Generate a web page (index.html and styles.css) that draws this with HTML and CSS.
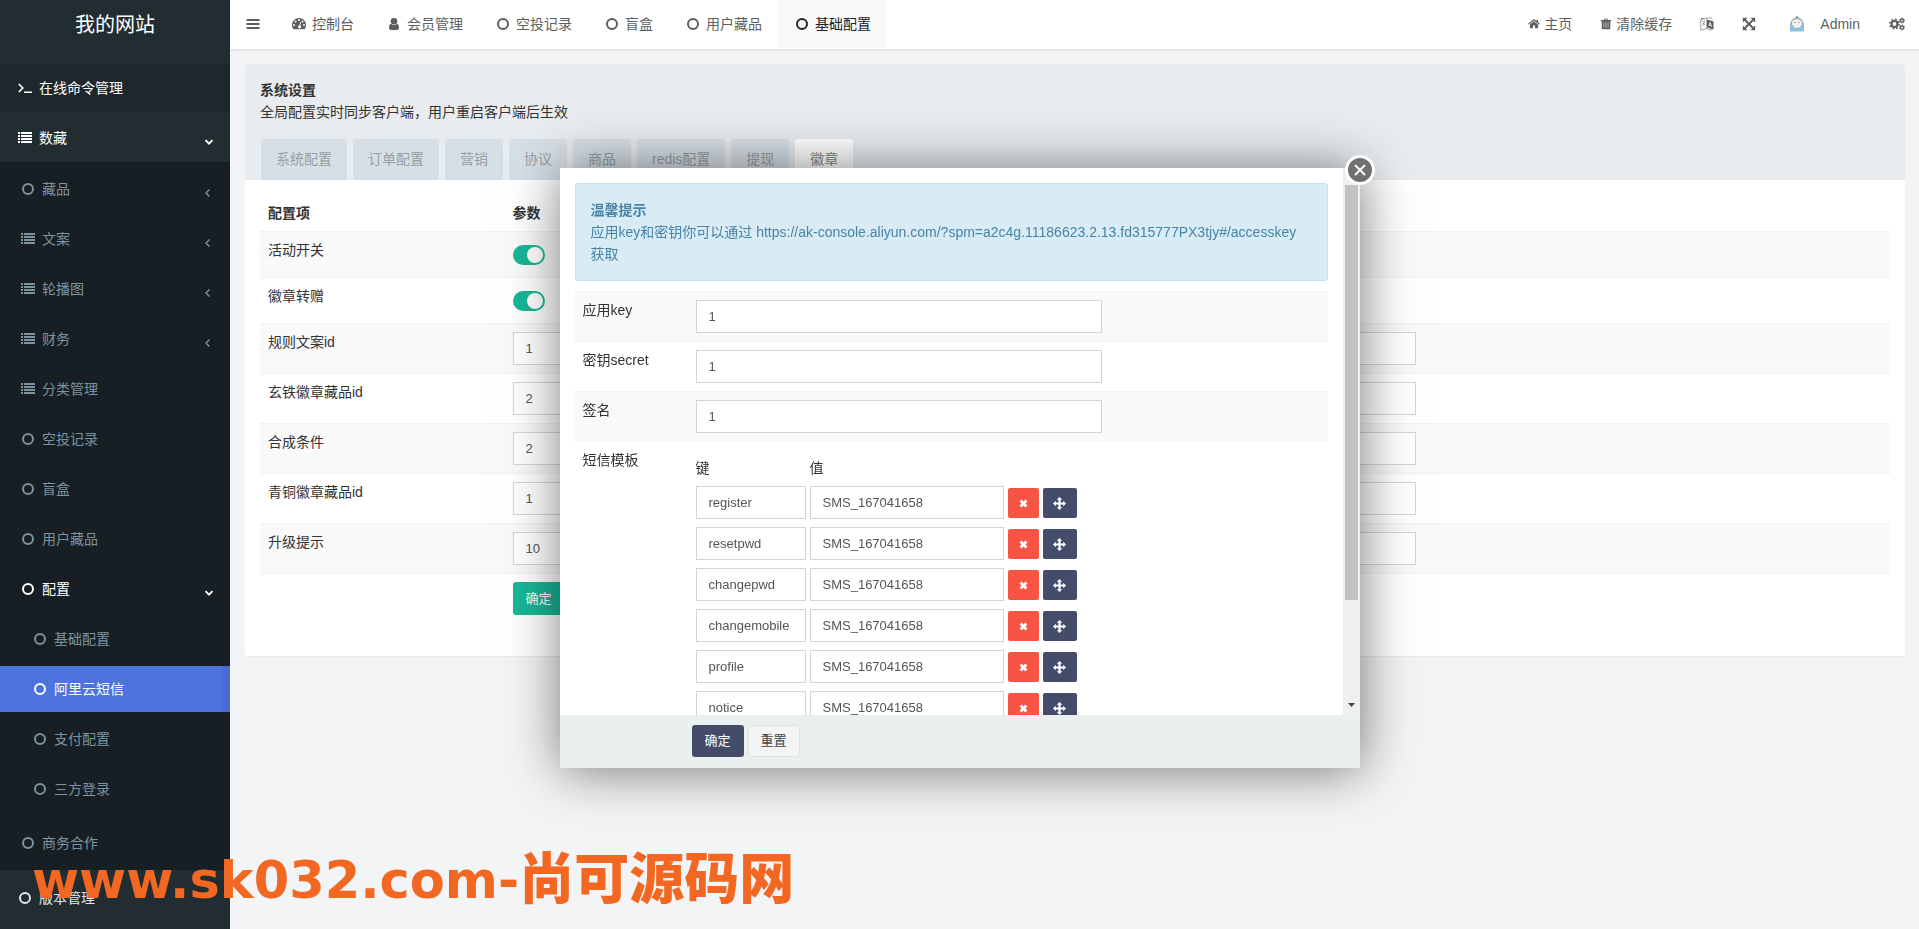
FILE: index.html
```
<!DOCTYPE html>
<html lang="zh-CN">
<head>
<meta charset="utf-8">
<title>我的网站</title>
<link rel="stylesheet" href="styles.css">
</head>
<body>
<svg class="sprite" aria-hidden="true">
  <symbol id="i-ring" viewBox="0 0 14 14"><circle cx="7" cy="7" r="5" fill="none" stroke="currentColor" stroke-width="2"/></symbol>
  <symbol id="i-list" viewBox="0 0 14 14"><path fill="currentColor" d="M0 1h2v2H0zM3 1h11v2H3zM0 4h2v2H0zM3 4h11v2H3zM0 7h2v2H0zM3 7h11v2H3zM0 10h2v2H0zM3 10h11v2H3z"/></symbol>
  <symbol id="i-term" viewBox="0 0 14 14"><path fill="none" stroke="currentColor" stroke-width="1.6" d="M.8 3l4 4-4 4"/><path fill="currentColor" d="M6 10.5h8V12H6z"/></symbol>
  <symbol id="i-bars" viewBox="0 0 14 14"><path fill="currentColor" d="M.5 2h13v2H.5zM.5 6h13v2H.5zM.5 10h13v2H.5z"/></symbol>
  <symbol id="i-dash" viewBox="0 0 14 14"><path fill="currentColor" fill-rule="evenodd" d="M7 1a7 7 0 0 0-5.900 10.700q.3.500.8.500h10.200q.5 0 .8-.5A7 7 0 0 0 7 1zM2 7a1 1 0 1 1 0 2 1 1 0 0 1 0-2zM3.500 3.500a1 1 0 1 1 0 2 1 1 0 0 1 0-2zM7 2a1 1 0 1 1 0 2 1 1 0 0 1 0-2zM10.500 3.500a1 1 0 1 1 0 2 1 1 0 0 1 0-2zM12 7a1 1 0 1 1 0 2 1 1 0 0 1 0-2zM8.400 4.900l.8.300-.9 3.200a1.600 1.600 0 1 1-.8-.2z"/></symbol>
  <symbol id="i-user" viewBox="0 0 14 14"><circle cx="7" cy="4.200" r="3.300" fill="currentColor"/><path fill="currentColor" d="M4 6.800C2.500 7.200 2 9 2 10.800 2 12 2.800 13 4 13h6c1.200 0 2-1 2-2.200 0-1.800-.5-3.600-2-4a4.200 4.200 0 0 1-6 0z"/></symbol>
  <symbol id="i-home" viewBox="0 0 14 14"><path fill="currentColor" d="M7 3.900l4.800 4v3.600q0 .5-.5.500H8.200V8.700H5.800V12H2.700q-.5 0-.5-.5V7.900z"/><path fill="none" stroke="currentColor" stroke-width="1.400" d="M.6 7.200L7 2l6.400 5.200"/><path fill="currentColor" d="M10 2h1.800v3.500L10 4z"/></symbol>
  <symbol id="i-trash" viewBox="0 0 14 14"><path fill="none" stroke="currentColor" d="M5 2.500l.5-1.300h3L9 2.500"/><path fill="currentColor" fill-rule="evenodd" d="M1 2.300h12v1.400h-1v8q0 1.500-1.300 1.500H3.300q-1.300 0-1.300-1.500v-8H1zM4.300 5v6.500h.6V5zM6.700 5v6.500h.6V5zM9.100 5v6.500h.6V5z"/></symbol>
  <symbol id="i-lang" viewBox="0 0 14 14"><path fill="none" stroke="currentColor" stroke-width=".6" d="M.8 2.500l6-1.700v10.400l-6 2zM7 11.500l3.500 1.500 1.500-.5M8 1.200l3-.7 1.500 2"/><path fill="none" stroke="currentColor" stroke-width=".6" d="M2.200 4.500l3-.8M4.700 4.500L2.500 9M3 6l2.500 2.300"/><path fill="currentColor" fill-rule="evenodd" d="M7 2.600l6.500 2v8L7 10.500zM9.800 5.300L8.500 9l.8.200.3-.8 1.300.4.3 1 .8.200L10.700 5.600zm.4 1.300l.5 1.400-.9-.3zM1 1h4L1 2.200z"/></symbol>
  <symbol id="i-full" viewBox="0 0 14 14"><path fill="currentColor" d="M.8.8h4.700L.8 5.500zM13.200.8v4.700L8.500.8zM.8 13.200V8.500l4.700 4.700zM13.200 13.200H8.500l4.700-4.700z"/><path stroke="currentColor" stroke-width="1.900" d="M2.500 2.500l9 9M11.500 2.500l-9 9"/></symbol>
  <symbol id="i-cogs" viewBox="0 0 16 14"><circle cx="5.500" cy="7" r="3" fill="none" stroke="currentColor" stroke-width="2.200"/><circle cx="5.500" cy="7" r="4.700" fill="none" stroke="currentColor" stroke-width="1.500" stroke-dasharray="1.850 1.840"/><circle cx="13" cy="3.600" r="1.600" fill="none" stroke="currentColor" stroke-width="1.300"/><circle cx="13" cy="3.600" r="2.500" fill="none" stroke="currentColor" stroke-dasharray="1 .96"/><circle cx="13" cy="10.600" r="1.600" fill="none" stroke="currentColor" stroke-width="1.300"/><circle cx="13" cy="10.600" r="2.500" fill="none" stroke="currentColor" stroke-dasharray="1 .96"/></symbol>
  <symbol id="i-left" viewBox="0 0 14 14"><path fill="none" stroke="currentColor" stroke-width="1.400" d="M8.500 3.500L5 7l3.500 3.500"/></symbol>
  <symbol id="i-down" viewBox="0 0 14 14"><path fill="none" stroke="currentColor" stroke-width="1.800" d="M3.500 5.200L7 8.700l3.500-3.500"/></symbol>
  <symbol id="i-times" viewBox="0 0 14 14"><path stroke="currentColor" stroke-width="4.400" d="M2.500 2.500l9 9M11.500 2.500l-9 9"/></symbol>
  <symbol id="i-move" viewBox="0 0 14 14"><path fill="currentColor" d="M7 0l3 3H8.200v2.800H11V4l3 3-3 3V8.200H8.200V11H10l-3 3-3-3h1.800V8.200H3V10L0 7l3-3v1.800h2.800V3H4z"/></symbol>
</svg>

<div class="app">
  <aside class="sidebar">
    <a class="brand" href="#">我的网站</a>
    <nav class="menu">
      <a class="item top dark" href="#"><svg class="ico"><use href="#i-term"/></svg>在线命令管理</a>
      <a class="item top" href="#"><svg class="ico"><use href="#i-list"/></svg>数藏<svg class="arrow"><use href="#i-down"/></svg></a>
      <div class="sub">
        <a class="item" href="#"><svg class="ico"><use href="#i-ring"/></svg>藏品<svg class="arrow"><use href="#i-left"/></svg></a>
        <a class="item" href="#"><svg class="ico"><use href="#i-list"/></svg>文案<svg class="arrow"><use href="#i-left"/></svg></a>
        <a class="item" href="#"><svg class="ico"><use href="#i-list"/></svg>轮播图<svg class="arrow"><use href="#i-left"/></svg></a>
        <a class="item" href="#"><svg class="ico"><use href="#i-list"/></svg>财务<svg class="arrow"><use href="#i-left"/></svg></a>
        <a class="item" href="#"><svg class="ico"><use href="#i-list"/></svg>分类管理</a>
        <a class="item" href="#"><svg class="ico"><use href="#i-ring"/></svg>空投记录</a>
        <a class="item" href="#"><svg class="ico"><use href="#i-ring"/></svg>盲盒</a>
        <a class="item" href="#"><svg class="ico"><use href="#i-ring"/></svg>用户藏品</a>
        <a class="item open" href="#"><svg class="ico"><use href="#i-ring"/></svg>配置<svg class="arrow"><use href="#i-down"/></svg></a>
        <div class="subsub">
          <a class="item" href="#"><svg class="ico"><use href="#i-ring"/></svg>基础配置</a>
          <a class="item active" href="#"><svg class="ico"><use href="#i-ring"/></svg>阿里云短信</a>
          <a class="item" href="#"><svg class="ico"><use href="#i-ring"/></svg>支付配置</a>
          <a class="item" href="#"><svg class="ico"><use href="#i-ring"/></svg>三方登录</a>
        </div>
        <a class="item" href="#"><svg class="ico"><use href="#i-ring"/></svg>商务合作</a>
      </div>
      <a class="item top last" href="#"><svg class="ico"><use href="#i-ring"/></svg>版本管理</a>
    </nav>
  </aside>

  <div class="main">
    <header class="navbar">
      <button class="nav-link bars" type="button" aria-label="菜单"><svg class="ico"><use href="#i-bars"/></svg></button>
      <nav class="nav-tabs">
        <a class="nav-link" href="#"><svg class="ico"><use href="#i-dash"/></svg>控制台</a>
        <a class="nav-link" href="#"><svg class="ico"><use href="#i-user"/></svg>会员管理</a>
        <a class="nav-link" href="#"><svg class="ico"><use href="#i-ring"/></svg>空投记录</a>
        <a class="nav-link" href="#"><svg class="ico"><use href="#i-ring"/></svg>盲盒</a>
        <a class="nav-link" href="#"><svg class="ico"><use href="#i-ring"/></svg>用户藏品</a>
        <a class="nav-link current" href="#"><svg class="ico"><use href="#i-ring"/></svg>基础配置</a>
      </nav>
      <nav class="nav-right">
        <a class="nav-link" href="#"><svg class="ico small"><use href="#i-home"/></svg>主页</a>
        <a class="nav-link" href="#"><svg class="ico small"><use href="#i-trash"/></svg>清除缓存</a>
        <a class="nav-link" href="#" aria-label="语言"><svg class="ico"><use href="#i-lang"/></svg></a>
        <a class="nav-link" href="#" aria-label="全屏"><svg class="ico"><use href="#i-full"/></svg></a>
        <a class="nav-link user" href="#">
          <svg class="avatar" viewBox="0 0 16 16"><path fill="#8cc4e6" d="M1 15.500V8c0-2 1-3 3-3h8c2 0 3 1 3 3v7.500z"/><circle cx="8" cy="7" r="5.500" fill="#eef3f5" stroke="#9aa9b2"/><path fill="none" stroke="#b0a08c" d="M4 4.500Q8 .5 12 4.500"/><circle cx="5.800" cy="6.500" r=".6" fill="#667"/><circle cx="10.200" cy="6.500" r=".6" fill="#667"/><circle cx="8" cy="1" r="1" fill="#8a8f88"/></svg>Admin</a>
        <a class="nav-link" href="#" aria-label="设置"><svg class="ico cogs"><use href="#i-cogs"/></svg></a>
      </nav>
    </header>

    <main class="content">
      <section class="panel">
        <div class="panel-head">
          <h1>系统设置</h1>
          <p>全局配置实时同步客户端，用户重启客户端后生效</p>
          <nav class="tabs">
            <a href="#">系统配置</a><a href="#">订单配置</a><a href="#">营销</a><a href="#">协议</a><a href="#">商品</a><a href="#">redis配置</a><a href="#">提现</a><a class="on" href="#">徽章</a>
          </nav>
        </div>
        <form class="panel-body">
          <table class="config">
            <thead><tr><th class="c-name">配置项</th><th class="c-value">参数</th><th></th></tr></thead>
            <tbody>
              <tr class="sw"><td><label for="a1">活动开关</label></td><td><input id="a1" class="switch" type="checkbox" checked></td><td></td></tr>
              <tr class="sw"><td><label for="a2">徽章转赠</label></td><td><input id="a2" class="switch" type="checkbox" checked></td><td></td></tr>
              <tr><td><label for="a3">规则文案id</label></td><td><input id="a3" class="field" type="text" value="1"></td><td></td></tr>
              <tr><td><label for="a4">玄铁徽章藏品id</label></td><td><input id="a4" class="field" type="text" value="2"></td><td></td></tr>
              <tr><td><label for="a5">合成条件</label></td><td><input id="a5" class="field" type="text" value="2"></td><td></td></tr>
              <tr><td><label for="a6">青铜徽章藏品id</label></td><td><input id="a6" class="field" type="text" value="1"></td><td></td></tr>
              <tr><td><label for="a7">升级提示</label></td><td><input id="a7" class="field" type="text" value="10"></td><td></td></tr>
            </tbody>
            <tfoot><tr><td></td><td><button class="btn green" type="button">确定</button></td><td></td></tr></tfoot>
          </table>
        </form>
      </section>
    </main>
  </div>
</div>

<div class="dialog" role="dialog" aria-label="阿里云短信">
  <div class="dialog-view">
    <div class="dialog-scroll">
      <div class="alert"><strong>温馨提示</strong><br>应用key和密钥你可以通过 https://ak-console.aliyun.com/?spm=a2c4g.11186623.2.13.fd315777PX3tjy#/accesskey 获取</div>
      <table class="config form">
        <tbody>
          <tr><td class="c-name"><label for="b1">应用key</label></td><td><input id="b1" class="field" type="text" value="1"></td></tr>
          <tr><td><label for="b2">密钥secret</label></td><td><input id="b2" class="field" type="text" value="1"></td></tr>
          <tr><td><label for="b3">签名</label></td><td><input id="b3" class="field" type="text" value="1"></td></tr>
          <tr><td>短信模板</td><td>
            <div class="pairs">
              <div class="pair heads"><span class="key">键</span><span class="val">值</span></div>
              <div class="pair"><input class="field key" aria-label="键" value="register"><input class="field val" aria-label="值" value="SMS_167041658"><button class="mini red" type="button" aria-label="删除"><svg><use href="#i-times"/></svg></button><button class="mini navy" type="button" aria-label="移动"><svg><use href="#i-move"/></svg></button></div>
              <div class="pair"><input class="field key" aria-label="键" value="resetpwd"><input class="field val" aria-label="值" value="SMS_167041658"><button class="mini red" type="button" aria-label="删除"><svg><use href="#i-times"/></svg></button><button class="mini navy" type="button" aria-label="移动"><svg><use href="#i-move"/></svg></button></div>
              <div class="pair"><input class="field key" aria-label="键" value="changepwd"><input class="field val" aria-label="值" value="SMS_167041658"><button class="mini red" type="button" aria-label="删除"><svg><use href="#i-times"/></svg></button><button class="mini navy" type="button" aria-label="移动"><svg><use href="#i-move"/></svg></button></div>
              <div class="pair"><input class="field key" aria-label="键" value="changemobile"><input class="field val" aria-label="值" value="SMS_167041658"><button class="mini red" type="button" aria-label="删除"><svg><use href="#i-times"/></svg></button><button class="mini navy" type="button" aria-label="移动"><svg><use href="#i-move"/></svg></button></div>
              <div class="pair"><input class="field key" aria-label="键" value="profile"><input class="field val" aria-label="值" value="SMS_167041658"><button class="mini red" type="button" aria-label="删除"><svg><use href="#i-times"/></svg></button><button class="mini navy" type="button" aria-label="移动"><svg><use href="#i-move"/></svg></button></div>
              <div class="pair"><input class="field key" aria-label="键" value="notice"><input class="field val" aria-label="值" value="SMS_167041658"><button class="mini red" type="button" aria-label="删除"><svg><use href="#i-times"/></svg></button><button class="mini navy" type="button" aria-label="移动"><svg><use href="#i-move"/></svg></button></div>
            </div>
          </td></tr>
        </tbody>
      </table>
    </div>
    <div class="scrollbar"><div class="thumb"></div><svg class="scroll-down" viewBox="0 0 7 4"><path fill="#444" d="M0 0h7L3.500 4z"/></svg></div>
  </div>
  <div class="dialog-foot"><button class="btn navy" type="button">确定</button><button class="btn plain" type="button">重置</button></div>
  <button class="close" type="button" aria-label="关闭"><svg viewBox="0 0 14 14"><path stroke="#fff" stroke-width="1.800" stroke-linecap="round" d="M2.500 2.500l9 9M11.500 2.500l-9 9"/></svg></button>
</div>

<div class="watermark"><span class="latin">www.sk032.com-</span>尚可源码网</div>
</body>
</html>
```
FILE: styles.css
```
* { box-sizing: border-box; }
body {
  margin: 0;
  font: 14px/20px "Liberation Sans", "Noto Sans CJK SC", sans-serif;
  color: #333;
  background: #f2f4f6;
  overflow: hidden;
}
a { color: inherit; text-decoration: none; }
button, input { font-family: inherit; margin: 0; }
.sprite { position: absolute; width: 0; height: 0; }
.app { display: flex; min-height: 100vh; }

/* sidebar */
.sidebar { flex: none; width: 230px; height: 100vh; overflow: hidden; background: #222d32; color: #fff; }
.brand { display: block; height: 64px; padding-top: 11px; text-align: center; font-size: 20px; line-height: 28px; }
.item { display: flex; align-items: center; gap: 7px; height: 46px; padding: 0 14px 0 21px; margin-bottom: 4px; color: #7c939e; }
.item .ico { width: 14px; height: 14px; flex: none; }
.item .arrow { width: 14px; height: 14px; margin: 8px 1px 0 auto; }
.item.top { height: 48px; margin: 0; padding: 0 13px 0 18px; color: #fff; }
.item.dark { background: #1e282c; margin-bottom: 2px; }
.item.open { padding-right: 13px; color: #fff; }
.item.last { margin-top: 4px; color: #dfe6ea; }
.sub { background: #181f24; padding-top: 4px; overflow: hidden; }
.subsub { margin-bottom: 8px; }
.subsub .item { padding-left: 33px; }
.item.active { background: linear-gradient(to left, #4a6cd0 8px, #4e73df 8px); color: #fff; }

/* top bar */
.main { flex: 1; min-width: 0; }
.navbar { display: flex; height: 50px; background: #fff; border-bottom: 1px solid #dde1e4; box-shadow: 0 1px 2px rgba(0, 0, 0, .06); color: #5c5f61; }
.nav-link { display: flex; align-items: center; gap: 5px; height: 48px; padding: 0 15px; border: 0; background: none; color: inherit; white-space: nowrap; }
.nav-link .ico { width: 14px; height: 14px; flex: none; }
.bars { width: 45px; padding-left: 16px; }
.nav-tabs { display: flex; }
.nav-tabs .nav-link { padding: 0 16px 0 17px; gap: 6px; }
.nav-tabs .current { background: #f8f8f8; color: #222; }
.nav-right { display: flex; margin-left: auto; }
.nav-right .nav-link { gap: 4px; padding: 0 14px; }
.nav-right .small { width: 12px; }
.nav-right .user { gap: 15px; padding: 0 15px 0 17px; }
.avatar { width: 16px; height: 16px; margin-left: 2px; }
.nav-right .cogs { width: 16px; }

/* panel */
.content { padding: 14px 14px 15px 15px; }
.panel { background: #fff; border-radius: 3px; box-shadow: 0 1px 1px rgba(0, 0, 0, .05); overflow: hidden; }
.panel-head { background: #e8ecef; padding: 15px 15px 0; }
.panel-head h1 { margin: 0; font-size: 14px; line-height: 22px; }
.panel-head p { margin: 0; line-height: 22px; }
.tabs { display: flex; gap: 6px; margin: 16px 1px 0; }
.tabs a { height: 41px; padding: 0 15px; border-radius: 3px 3px 0 0; background: #d6dfe5; line-height: 41px; color: #96a0a5; }
.tabs .on { background: #fff; color: #7b8a8b; }
.panel-body { margin: 0; padding: 15px 15px 33px; }

/* tables */
.config { width: 100%; border-collapse: separate; border-spacing: 0; table-layout: fixed; }
.config th, .config td { padding: 8px; text-align: left; vertical-align: top; }
.config tbody td { border-top: 1px solid #f2f2f2; }
.config tbody tr:nth-child(odd) td { background: #f9f9f9; }
.config tfoot td { border-top: 1px solid #f2f2f2; }
.c-name { width: 15%; }
.c-value { width: 56.4%; }
.sw td:nth-child(2) { padding: 13px 8px 12px; }
.switch { display: block; appearance: none; width: 32px; height: 20px; padding: 2px; border-radius: 10px; background: #18b797; }
.switch::after { content: ""; display: block; width: 16px; height: 16px; margin-left: auto; border-radius: 8px; background: #fff; }
.field { display: block; width: 100%; height: 33px; padding: 0 12px; border: 1px solid #d2d6da; border-radius: 0; background: #fff; color: #555; font-size: 13px; }
.btn { height: 33px; padding: 0 12px; border: 1px solid transparent; border-radius: 3px; color: #fff; font-size: 13px; line-height: 20px; }
.green { background: #18b797; }
.navy { background: #444c69; }
.plain { background: #f4f4f4; border-color: #e2e4e4; color: #444; }

/* dialog */
.dialog { position: fixed; top: 168px; left: calc(50% - 400px); width: 800px; height: 600px; display: flex; flex-direction: column; background: #fff; box-shadow: 1px 2px 50px rgba(0, 0, 0, .52); }
.dialog-view { flex: 1; min-height: 0; display: flex; }
.dialog-scroll { flex: 1; overflow: hidden; padding: 15px; }
.alert { padding: 15px; border: 1px solid #c3e2ee; border-radius: 3px; background: #d9ebf5; color: #4684a8; line-height: 22px; margin-bottom: 10px; }
.form .c-name { width: 113px; }
.form > tbody > tr > td > .field { width: 406px; }
.form tbody tr:last-child td { border-top-color: #f5f5f5; }
.pairs { padding-top: 8px; }
.pair { display: flex; align-items: center; gap: 4px; margin-bottom: 8px; }
.heads { height: 20px; }
.key { width: 110px; }
.val { width: 194px; }
.mini { display: flex; align-items: center; justify-content: center; height: 30px; width: 31px; margin-top: 1px; padding: 0; border: 0; border-radius: 2px; color: #fff; }
.mini.navy { width: 34px; }
.mini svg { width: 13px; height: 13px; }
.mini.red svg { width: 9px; height: 9px; }
.red { background: #f75444; }
.scrollbar { width: 17px; padding: 17px 2px 8px; background: #f0f0f0; display: flex; flex-direction: column; align-items: center; justify-content: space-between; }
.thumb { width: 13px; height: 415px; background: #c1c2c2; }
.scroll-down { width: 7px; height: 4px; }
.dialog-foot { display: flex; gap: 4px; height: 53px; padding: 10px 132px; background: #eaefef; }
.dialog-foot .btn { height: 32px; }
.close { position: absolute; top: -13px; right: -15px; width: 30px; height: 30px; display: flex; align-items: center; justify-content: center; padding: 0; border: 3px solid #fff; border-radius: 15px; background: #6e7072; }
.close svg { width: 14px; height: 14px; }

/* watermark */
.watermark { position: fixed; left: 32px; bottom: 16px; color: #f26822; font: 900 55px/64px "Noto Sans CJK SC", sans-serif; white-space: nowrap; }
.latin { font-family: "DejaVu Sans", sans-serif; font-size: 51px; font-weight: 700; }
```
